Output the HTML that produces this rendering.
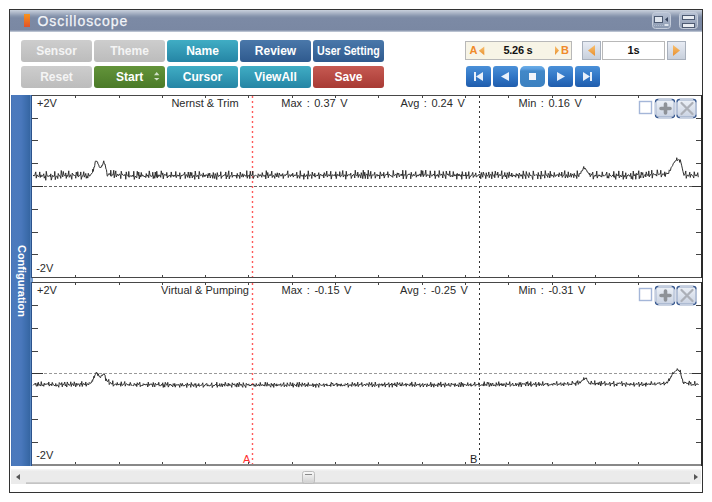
<!DOCTYPE html>
<html><head><meta charset="utf-8">
<style>
*{margin:0;padding:0;box-sizing:border-box}
html,body{width:712px;height:502px;background:#fff;overflow:hidden;font-family:"Liberation Sans",sans-serif}
.abs{position:absolute}
#win{position:absolute;left:9px;top:9px;width:694px;height:484px;border:1px solid #333;background:#fff}
#title{position:absolute;left:10px;top:10px;width:692px;height:22px;background:linear-gradient(#c8d0dc 0px,#aab4c6 3px,#8896ae 6px,#7c8aa5 8px,#7a88a3 20px,#a8b2c4 21px,#c8d0dc 22px)}
#title .t{position:absolute;left:27.5px;top:2px;font-size:14px;color:#f2f4f8;letter-spacing:0.95px;line-height:18px;-webkit-text-stroke:0.25px #f2f4f8}
#ticon{position:absolute;left:24px;top:14px;width:6px;height:13px;background:linear-gradient(#f7941d,#f07a20 40%,#e2522b)}
.tb{position:absolute;top:13px;width:19px;height:16px;border:1px solid #6a7894;border-radius:3px;background:linear-gradient(#c8d0de,#9aa6bc)}
.btn{position:absolute;width:71px;height:22px;border-radius:3px;color:#fff;font-size:12px;font-weight:bold;text-align:center;line-height:22px;white-space:nowrap}
.gray{background:linear-gradient(#cdcdcd,#bcbcbc);color:#f4f4f4}
.green{background:linear-gradient(#63943a,#4b7a28)}
.teal{background:linear-gradient(#40adc4,#2585a5)}
.blue{background:linear-gradient(#4a78aa,#2f5a8e)}
.red{background:linear-gradient(#c65a52,#a83a34)}
.mbtn{position:absolute;top:66px;width:25px;height:21px;border-radius:3px;background:linear-gradient(#4a90d8,#2f74c4 55%,#1f5cac)}
#sidebar{position:absolute;left:11px;top:95px;width:22px;height:371px;background:linear-gradient(90deg,#3d6aae 0px,#4c7abd 1px,#4a78bc 10px,#4272b4 13px,#3a6aa8 17px,#3565a2 19px,#5a88c0 19.5px,#5a88c0 20px,#2c528c 20.5px,#223a60 22px)}
#sidebar .t{position:absolute;left:-29px;top:179.5px;width:80px;font-size:11px;font-weight:bold;color:#fff;transform:rotate(90deg);transform-origin:center center;text-align:center;line-height:12px}
.lbl{position:absolute;font-size:11px;color:#222;white-space:nowrap;line-height:12px}
</style></head>
<body>
<div id="win"></div>
<div id="title"><div class="t">Oscilloscope</div></div>
<div id="ticon"></div>

<div class="btn gray" style="left:21px;top:40px">Sensor</div>
<div class="btn gray" style="left:94px;top:40px">Theme</div>
<div class="btn teal" style="left:167px;top:40px">Name</div>
<div class="btn blue" style="left:240px;top:40px">Review</div>
<div class="btn blue" style="left:313px;top:40px"><span style="display:inline-block;transform:scaleX(0.885)">User Setting</span></div>
<div class="btn gray" style="left:21px;top:66px">Reset</div>
<div class="btn green" style="left:94px;top:66px"><span style="position:absolute;left:22px;top:0">Start</span></div>
<div class="btn teal" style="left:167px;top:66px">Cursor</div>
<div class="btn teal" style="left:240px;top:66px">ViewAll</div>
<div class="btn red" style="left:313px;top:66px">Save</div>

<div class="abs" style="left:465px;top:41px;width:107px;height:19px;background:#f7f4e6;border:1px solid #b8b8b8"></div>
<div class="abs" style="left:469.5px;top:43px;font-size:11px;font-weight:bold;color:#f08a2a;line-height:14px">A</div>
<div class="abs" style="left:503.5px;top:43px;font-size:11px;font-weight:bold;color:#111;line-height:14px;letter-spacing:-0.3px">5.26 s</div>
<div class="abs" style="left:561px;top:43px;font-size:11px;font-weight:bold;color:#f08a2a;line-height:14px">B</div>
<div class="abs" style="left:582px;top:41px;width:19px;height:19px;background:linear-gradient(#e8ecf4,#c8d0dc);border:1px solid #a8b0bc"></div>
<div class="abs" style="left:602px;top:41px;width:63px;height:19px;background:#fff;border:1px solid #b8b8b8;font-size:11px;font-weight:bold;text-align:center;line-height:17px;color:#111">1s</div>
<div class="abs" style="left:667px;top:41px;width:19px;height:19px;background:linear-gradient(#e8ecf4,#c8d0dc);border:1px solid #a8b0bc"></div>

<div class="mbtn" style="left:466px"></div>
<div class="mbtn" style="left:493px"></div>
<div class="mbtn" style="left:520px;border-radius:5px;background:linear-gradient(#6aaee8 0px,#5a9ee0 3px,#4288c8 5px,#3b80c0 100%)"></div>
<div class="mbtn" style="left:548px"></div>
<div class="mbtn" style="left:575px"></div>

<div id="sidebar"><div class="t">Configuration</div></div>

<svg class="abs" style="left:0;top:0" width="712" height="502">
<defs><linearGradient id="pb" x1="0" y1="0" x2="0" y2="1"><stop offset="0" stop-color="#eef2f8"/><stop offset="1" stop-color="#c9d2e2"/></linearGradient><linearGradient id="trk" x1="0" y1="0" x2="0" y2="1"><stop offset="0" stop-color="#f8f8f8"/><stop offset="0.15" stop-color="#ebebeb"/><stop offset="1" stop-color="#ebebeb"/></linearGradient><linearGradient id="thumb" x1="0" y1="0" x2="0" y2="1"><stop offset="0" stop-color="#fafafa"/><stop offset="1" stop-color="#cfcfcf"/></linearGradient><linearGradient id="tbb" x1="0" y1="0" x2="0" y2="1"><stop offset="0" stop-color="#b8c2d4"/><stop offset="1" stop-color="#8a98b0"/></linearGradient><linearGradient id="arr" x1="0" y1="0" x2="0" y2="1"><stop offset="0" stop-color="#f8c070"/><stop offset="1" stop-color="#e89030"/></linearGradient></defs>
<rect x="32" y="95" width="670" height="182" fill="#fff"/>
<line x1="75.5" y1="95" x2="75.5" y2="98" stroke="#444" stroke-width="1"/>
<line x1="75.5" y1="275" x2="75.5" y2="277" stroke="#444" stroke-width="1"/>
<line x1="119.5" y1="95" x2="119.5" y2="98" stroke="#444" stroke-width="1"/>
<line x1="119.5" y1="275" x2="119.5" y2="277" stroke="#444" stroke-width="1"/>
<line x1="162.5" y1="95" x2="162.5" y2="98" stroke="#444" stroke-width="1"/>
<line x1="162.5" y1="275" x2="162.5" y2="277" stroke="#444" stroke-width="1"/>
<line x1="205.5" y1="95" x2="205.5" y2="98" stroke="#444" stroke-width="1"/>
<line x1="205.5" y1="275" x2="205.5" y2="277" stroke="#444" stroke-width="1"/>
<line x1="248.5" y1="95" x2="248.5" y2="98" stroke="#444" stroke-width="1"/>
<line x1="248.5" y1="275" x2="248.5" y2="277" stroke="#444" stroke-width="1"/>
<line x1="292.5" y1="95" x2="292.5" y2="98" stroke="#444" stroke-width="1"/>
<line x1="292.5" y1="275" x2="292.5" y2="277" stroke="#444" stroke-width="1"/>
<line x1="335.5" y1="95" x2="335.5" y2="98" stroke="#444" stroke-width="1"/>
<line x1="335.5" y1="275" x2="335.5" y2="277" stroke="#444" stroke-width="1"/>
<line x1="378.5" y1="95" x2="378.5" y2="98" stroke="#444" stroke-width="1"/>
<line x1="378.5" y1="275" x2="378.5" y2="277" stroke="#444" stroke-width="1"/>
<line x1="422.5" y1="95" x2="422.5" y2="98" stroke="#444" stroke-width="1"/>
<line x1="422.5" y1="275" x2="422.5" y2="277" stroke="#444" stroke-width="1"/>
<line x1="465.5" y1="95" x2="465.5" y2="98" stroke="#444" stroke-width="1"/>
<line x1="465.5" y1="275" x2="465.5" y2="277" stroke="#444" stroke-width="1"/>
<line x1="508.5" y1="95" x2="508.5" y2="98" stroke="#444" stroke-width="1"/>
<line x1="508.5" y1="275" x2="508.5" y2="277" stroke="#444" stroke-width="1"/>
<line x1="552.5" y1="95" x2="552.5" y2="98" stroke="#444" stroke-width="1"/>
<line x1="552.5" y1="275" x2="552.5" y2="277" stroke="#444" stroke-width="1"/>
<line x1="595.5" y1="95" x2="595.5" y2="98" stroke="#444" stroke-width="1"/>
<line x1="595.5" y1="275" x2="595.5" y2="277" stroke="#444" stroke-width="1"/>
<line x1="638.5" y1="95" x2="638.5" y2="98" stroke="#444" stroke-width="1"/>
<line x1="638.5" y1="275" x2="638.5" y2="277" stroke="#444" stroke-width="1"/>
<line x1="32" y1="118.5" x2="38" y2="118.5" stroke="#444" stroke-width="1"/>
<line x1="696" y1="118.5" x2="702" y2="118.5" stroke="#444" stroke-width="1"/>
<line x1="32" y1="140.5" x2="38" y2="140.5" stroke="#444" stroke-width="1"/>
<line x1="696" y1="140.5" x2="702" y2="140.5" stroke="#444" stroke-width="1"/>
<line x1="32" y1="163.5" x2="38" y2="163.5" stroke="#444" stroke-width="1"/>
<line x1="696" y1="163.5" x2="702" y2="163.5" stroke="#444" stroke-width="1"/>
<line x1="32" y1="209.5" x2="38" y2="209.5" stroke="#444" stroke-width="1"/>
<line x1="696" y1="209.5" x2="702" y2="209.5" stroke="#444" stroke-width="1"/>
<line x1="32" y1="232.5" x2="38" y2="232.5" stroke="#444" stroke-width="1"/>
<line x1="696" y1="232.5" x2="702" y2="232.5" stroke="#444" stroke-width="1"/>
<line x1="32" y1="254.5" x2="38" y2="254.5" stroke="#444" stroke-width="1"/>
<line x1="696" y1="254.5" x2="702" y2="254.5" stroke="#444" stroke-width="1"/>
<line x1="32" y1="186.5" x2="43" y2="186.5" stroke="#333" stroke-width="1"/>
<line x1="692" y1="186.5" x2="702" y2="186.5" stroke="#333" stroke-width="1"/>
<line x1="44" y1="186.5" x2="692" y2="186.5" stroke="#666" stroke-width="1" stroke-dasharray="3,2"/>
<line x1="252.5" y1="96" x2="252.5" y2="277" stroke="#ff5a5a" stroke-width="1.4" stroke-dasharray="2,3"/>
<line x1="479.5" y1="96" x2="479.5" y2="277" stroke="#333" stroke-width="1" stroke-dasharray="2,3"/>
<path d="M33.00,175.60 L34.00,175.54 L34.50,175.71 L35.00,174.37 L35.75,171.88 L36.25,178.17 L37.00,174.87 L37.50,175.98 L38.00,175.85 L38.50,176.49 L39.00,176.57 L39.75,171.92 L40.25,177.48 L41.00,174.84 L41.50,176.64 L42.00,176.14 L43.00,175.67 L43.75,173.79 L44.25,178.18 L45.00,176.66 L45.50,175.81 L45.75,180.29 L46.25,171.31 L47.00,175.76 L48.00,176.33 L48.50,176.44 L49.00,175.44 L49.50,175.84 L50.00,175.35 L50.50,176.71 L50.75,173.86 L51.25,180.11 L52.00,177.36 L52.50,175.36 L53.00,176.58 L54.00,175.79 L54.50,175.93 L54.75,171.42 L55.25,179.67 L56.00,176.61 L56.50,176.08 L57.00,175.99 L57.75,178.59 L58.25,173.51 L59.00,175.55 L59.50,175.50 L60.00,176.66 L60.50,176.39 L60.75,178.38 L61.25,170.52 L62.00,174.66 L62.50,176.08 L62.75,176.98 L63.25,171.48 L64.00,175.20 L64.50,175.57 L65.00,176.07 L65.50,174.41 L65.75,172.93 L66.25,178.42 L67.00,175.09 L67.50,176.39 L68.00,175.36 L68.75,170.84 L69.25,177.28 L70.00,176.12 L70.50,174.74 L71.00,175.97 L71.75,179.32 L72.25,173.06 L73.00,174.54 L73.50,174.61 L74.00,175.51 L74.50,176.01 L75.00,175.26 L75.50,176.39 L75.75,178.24 L76.25,172.14 L77.00,174.65 L77.50,175.81 L77.75,171.70 L78.25,177.05 L79.00,175.99 L79.50,175.24 L80.00,174.87 L80.50,174.94 L80.75,171.93 L81.25,179.34 L82.00,176.25 L83.00,175.72 L83.75,171.71 L84.25,177.13 L85.00,175.29 L85.50,174.93 L85.75,173.47 L86.25,178.29 L87.00,175.82 L87.50,176.41 L87.75,178.12 L88.25,173.31 L89.00,175.72 L89.50,176.22 L90.00,174.75 L90.50,175.04 L91.00,174.58 L92.00,172.94 L92.50,172.50 L92.75,169.19 L93.25,171.40 L94.00,166.92 L94.50,166.95 L94.75,165.28 L95.25,161.38 L96.00,160.87 L97.00,161.73 L97.50,161.81 L98.00,164.06 L98.75,164.88 L99.25,166.85 L100.00,167.82 L101.00,166.83 L101.50,167.07 L102.00,165.02 L102.50,165.26 L103.00,163.65 L103.75,160.82 L104.25,163.82 L105.00,163.96 L106.00,169.13 L106.50,169.74 L106.75,172.38 L107.25,176.17 L108.00,175.47 L108.50,173.74 L109.00,174.25 L110.00,173.61 L110.50,175.67 L110.75,170.23 L111.25,176.35 L112.00,175.42 L112.50,174.73 L113.00,175.11 L113.75,170.28 L114.25,177.79 L115.00,174.31 L115.75,170.90 L116.25,176.98 L117.00,175.55 L117.50,174.11 L118.00,174.86 L118.50,175.69 L119.00,174.44 L119.50,174.02 L120.00,175.35 L120.50,175.35 L120.75,178.62 L121.25,171.24 L122.00,174.51 L123.00,174.69 L124.00,175.84 L125.00,174.31 L125.50,175.95 L125.75,179.25 L126.25,171.88 L127.00,175.21 L128.00,176.39 L128.50,176.45 L128.75,171.45 L129.25,177.28 L130.00,176.45 L130.50,175.71 L131.00,175.94 L132.00,176.30 L132.50,175.22 L133.00,176.66 L133.50,176.41 L133.75,171.26 L134.25,179.40 L135.00,176.48 L136.00,176.65 L136.75,177.83 L137.25,171.28 L138.00,175.27 L138.50,175.47 L138.75,172.06 L139.25,179.00 L140.00,174.98 L140.75,177.09 L141.25,172.46 L142.00,176.23 L142.50,174.83 L143.00,175.64 L144.00,176.35 L145.00,176.58 L145.50,176.59 L145.75,177.58 L146.25,173.57 L147.00,176.33 L148.00,174.86 L148.75,177.67 L149.25,170.90 L150.00,174.96 L151.00,176.63 L152.00,175.76 L152.50,175.68 L152.75,172.21 L153.25,178.57 L154.00,175.64 L154.50,176.26 L154.75,178.28 L155.25,172.02 L156.00,176.55 L156.50,176.53 L156.75,171.25 L157.25,178.05 L158.00,174.78 L158.50,176.29 L159.00,176.48 L159.50,175.20 L160.00,174.92 L160.75,177.34 L161.25,170.84 L162.00,174.58 L162.50,174.53 L162.75,172.93 L163.25,178.88 L164.00,174.73 L165.00,174.77 L166.00,175.05 L166.50,175.67 L166.75,172.43 L167.25,177.98 L168.00,175.85 L169.00,176.40 L170.00,174.98 L170.50,175.69 L170.75,177.35 L171.25,171.94 L172.00,176.28 L173.00,175.19 L173.50,176.53 L174.00,174.98 L175.00,176.45 L175.50,175.03 L175.75,171.49 L176.25,177.67 L177.00,175.70 L178.00,174.94 L179.00,176.26 L179.50,175.75 L179.75,172.69 L180.25,179.13 L181.00,175.61 L182.00,175.61 L183.00,174.92 L183.50,174.73 L184.00,174.58 L184.75,172.18 L185.25,178.48 L186.00,174.75 L186.50,174.85 L187.00,175.12 L187.75,177.35 L188.25,171.97 L189.00,176.18 L189.50,175.53 L189.75,178.12 L190.25,172.18 L191.00,175.89 L191.50,174.94 L191.75,172.52 L192.25,177.93 L193.00,175.83 L193.50,176.24 L194.00,175.21 L194.50,176.35 L194.75,179.36 L195.25,171.00 L196.00,175.82 L197.00,176.66 L198.00,175.07 L198.75,179.02 L199.25,171.43 L200.00,174.79 L200.50,175.69 L201.00,175.31 L201.50,174.90 L202.00,174.96 L202.50,176.25 L202.75,177.26 L203.25,172.87 L204.00,176.49 L204.50,175.10 L205.00,176.62 L205.50,174.98 L206.00,175.39 L206.50,174.67 L207.00,175.63 L207.50,174.97 L207.75,178.03 L208.25,173.46 L209.00,175.85 L209.75,173.02 L210.25,178.04 L211.00,175.93 L211.50,175.07 L212.00,175.11 L212.50,175.69 L212.75,178.35 L213.25,172.50 L214.00,175.90 L214.75,178.55 L215.25,173.60 L216.00,175.35 L216.75,179.52 L217.25,172.60 L218.00,175.84 L218.50,176.58 L219.00,175.43 L220.00,175.82 L220.50,175.13 L220.75,171.72 L221.25,178.46 L222.00,176.15 L222.50,176.20 L223.00,175.79 L224.00,175.40 L225.00,174.62 L225.50,175.38 L225.75,171.96 L226.25,178.88 L227.00,175.44 L227.50,176.64 L228.00,175.04 L228.75,170.80 L229.25,178.88 L230.00,175.83 L230.50,175.87 L231.00,175.50 L231.50,174.61 L231.75,172.13 L232.25,177.32 L233.00,175.42 L234.00,175.91 L235.00,175.30 L236.00,176.29 L236.50,175.14 L236.75,178.25 L237.25,173.43 L238.00,176.23 L239.00,175.29 L239.50,176.01 L239.75,178.54 L240.25,172.01 L241.00,174.92 L241.50,176.66 L242.00,176.51 L242.75,173.72 L243.25,177.16 L244.00,174.56 L244.50,174.99 L245.00,175.11 L246.00,176.51 L246.50,175.02 L246.75,170.66 L247.25,178.26 L248.00,175.26 L249.00,176.34 L249.50,174.76 L249.75,178.62 L250.25,171.22 L251.00,175.48 L252.00,175.35 L252.50,174.83 L252.75,171.13 L253.25,178.55 L254.00,176.31 L254.50,175.93 L255.00,175.77 L255.50,175.20 L256.00,175.68 L256.50,175.74 L257.00,176.28 L257.50,176.30 L257.75,177.79 L258.25,173.80 L259.00,174.66 L259.50,176.08 L260.00,176.01 L260.50,174.79 L261.00,175.27 L261.75,177.28 L262.25,172.64 L263.00,175.78 L264.00,175.98 L264.50,175.64 L265.00,176.65 L265.50,174.96 L265.75,178.87 L266.25,170.67 L267.00,175.26 L267.50,175.27 L267.75,172.53 L268.25,177.97 L269.00,175.27 L269.50,174.80 L270.00,175.76 L270.50,174.66 L271.00,175.46 L271.75,171.17 L272.25,177.53 L273.00,175.70 L274.00,175.88 L274.75,178.37 L275.25,173.59 L276.00,175.18 L276.50,174.68 L276.75,177.01 L277.25,172.78 L278.00,176.08 L278.75,177.52 L279.25,172.99 L280.00,175.18 L280.50,175.21 L281.00,176.21 L281.50,174.74 L282.00,175.51 L282.75,173.55 L283.25,178.54 L284.00,175.20 L284.50,175.26 L285.00,174.63 L285.50,175.62 L286.00,174.48 L286.50,174.45 L287.00,174.67 L287.75,170.80 L288.25,177.56 L289.00,175.25 L289.50,174.87 L290.00,175.35 L290.50,176.55 L291.00,174.55 L291.50,174.67 L292.00,175.84 L292.75,173.18 L293.25,177.08 L294.00,175.47 L295.00,175.10 L295.50,175.20 L296.00,175.70 L296.75,172.22 L297.25,178.23 L298.00,175.29 L299.00,176.46 L299.75,178.33 L300.25,170.69 L301.00,176.35 L302.00,175.14 L303.00,176.49 L303.50,174.87 L303.75,179.34 L304.25,173.57 L305.00,176.52 L306.00,176.07 L307.00,174.49 L307.75,179.13 L308.25,170.81 L309.00,176.11 L310.00,175.68 L310.50,174.70 L311.00,175.05 L311.50,176.26 L311.75,178.50 L312.25,172.01 L313.00,175.47 L313.50,175.59 L314.00,174.72 L314.50,176.35 L314.75,173.19 L315.25,177.16 L316.00,175.90 L316.50,175.38 L317.00,175.35 L318.00,175.60 L318.75,172.67 L319.25,178.86 L320.00,174.50 L321.00,174.75 L322.00,175.45 L322.50,176.12 L323.00,174.97 L323.50,174.45 L323.75,177.99 L324.25,172.64 L325.00,174.44 L325.50,175.74 L326.00,175.76 L326.75,171.07 L327.25,177.08 L328.00,175.83 L328.50,174.91 L329.00,174.50 L330.00,176.13 L330.75,171.26 L331.25,179.09 L332.00,175.07 L333.00,174.89 L333.50,175.10 L334.00,175.70 L334.50,174.67 L335.00,175.83 L335.50,176.30 L335.75,171.74 L336.25,178.60 L337.00,174.42 L337.50,174.42 L338.00,175.70 L339.00,174.60 L339.50,176.05 L339.75,171.62 L340.25,176.93 L341.00,176.37 L341.50,175.89 L342.00,174.94 L342.75,170.52 L343.25,177.05 L344.00,175.99 L344.50,174.91 L345.00,175.08 L345.50,175.06 L345.75,179.22 L346.25,171.25 L347.00,176.33 L348.00,174.73 L348.50,174.83 L349.00,175.13 L350.00,174.60 L350.50,174.80 L350.75,173.16 L351.25,178.50 L352.00,176.13 L353.00,174.91 L354.00,174.44 L354.75,177.97 L355.25,170.27 L356.00,175.37 L356.50,175.57 L357.00,175.82 L357.50,175.17 L357.75,172.10 L358.25,177.48 L359.00,174.69 L360.00,175.10 L360.75,178.08 L361.25,172.67 L362.00,175.32 L362.50,176.09 L362.75,178.71 L363.25,170.21 L364.00,176.13 L364.50,175.59 L364.75,172.24 L365.25,178.55 L366.00,174.48 L367.00,174.23 L367.50,174.46 L367.75,179.00 L368.25,170.20 L369.00,175.72 L370.00,176.04 L370.75,171.31 L371.25,178.53 L372.00,175.07 L372.50,174.89 L373.00,175.29 L373.50,175.18 L374.00,174.61 L374.75,172.30 L375.25,178.19 L376.00,175.75 L376.50,175.11 L377.00,174.24 L377.50,175.99 L378.00,176.02 L379.00,174.90 L379.50,175.96 L379.75,178.85 L380.25,171.84 L381.00,174.25 L381.50,176.06 L382.00,174.72 L383.00,174.91 L383.50,175.98 L383.75,172.37 L384.25,178.08 L385.00,175.29 L386.00,174.64 L387.00,174.12 L387.50,174.95 L387.75,171.68 L388.25,177.49 L389.00,174.19 L390.00,175.15 L391.00,176.01 L392.00,176.14 L392.75,177.39 L393.25,170.45 L394.00,175.70 L394.50,175.57 L395.00,175.17 L396.00,174.14 L396.75,177.81 L397.25,172.86 L398.00,174.56 L398.75,173.18 L399.25,176.85 L400.00,175.69 L400.50,174.68 L401.00,175.19 L401.50,173.97 L402.00,175.89 L402.50,175.01 L402.75,170.23 L403.25,178.95 L404.00,174.36 L405.00,175.44 L405.50,174.62 L405.75,170.48 L406.25,178.76 L407.00,175.87 L408.00,174.38 L409.00,174.36 L410.00,174.05 L410.50,175.54 L410.75,178.79 L411.25,172.28 L412.00,175.89 L412.50,176.06 L413.00,175.67 L413.50,174.33 L414.00,175.86 L414.50,175.48 L415.00,174.56 L415.75,171.69 L416.25,177.24 L417.00,175.13 L417.50,175.11 L418.00,176.13 L419.00,174.38 L419.50,174.27 L420.00,175.45 L420.50,174.15 L420.75,176.68 L421.25,170.36 L422.00,175.31 L422.50,174.55 L422.75,170.74 L423.25,176.73 L424.00,174.54 L424.50,175.21 L425.00,174.42 L425.75,170.15 L426.25,176.60 L427.00,174.86 L428.00,175.12 L428.50,175.24 L429.00,175.44 L429.50,175.47 L429.75,177.87 L430.25,170.83 L431.00,175.54 L432.00,176.13 L432.50,175.75 L433.00,174.40 L434.00,174.56 L434.50,175.75 L434.75,170.84 L435.25,178.61 L436.00,175.25 L437.00,175.39 L437.50,174.50 L438.00,176.20 L438.50,175.05 L438.75,177.41 L439.25,170.56 L440.00,175.16 L440.50,175.04 L441.00,174.65 L442.00,174.24 L442.75,178.00 L443.25,171.59 L444.00,175.46 L444.50,175.02 L445.00,175.62 L445.75,178.63 L446.25,171.05 L447.00,174.30 L448.00,174.48 L448.50,174.46 L449.00,175.63 L449.75,170.91 L450.25,176.77 L451.00,175.66 L452.00,176.23 L452.50,175.78 L452.75,176.98 L453.25,171.52 L454.00,175.77 L454.50,174.66 L455.00,176.09 L455.50,175.00 L456.00,174.80 L456.50,174.31 L456.75,179.23 L457.25,173.38 L458.00,175.50 L458.50,174.41 L459.00,176.03 L459.50,174.34 L460.00,174.66 L460.50,176.24 L461.00,176.19 L461.50,174.51 L461.75,179.25 L462.25,171.61 L463.00,175.70 L464.00,175.47 L465.00,175.20 L465.50,176.03 L465.75,172.29 L466.25,178.71 L467.00,174.73 L468.00,175.96 L468.50,175.07 L468.75,171.62 L469.25,178.67 L470.00,176.39 L471.00,176.10 L471.50,175.05 L472.00,174.37 L472.75,172.38 L473.25,177.43 L474.00,175.85 L475.00,175.47 L475.75,172.87 L476.25,176.99 L477.00,176.29 L477.50,175.91 L478.00,175.82 L479.00,174.28 L479.50,175.08 L480.00,174.42 L480.75,178.75 L481.25,172.54 L482.00,174.91 L482.75,177.24 L483.25,172.01 L484.00,174.33 L484.50,175.19 L485.00,175.46 L485.50,175.81 L485.75,178.65 L486.25,172.77 L487.00,176.20 L488.00,175.45 L488.50,174.57 L488.75,171.95 L489.25,177.70 L490.00,175.04 L490.50,174.37 L491.00,174.34 L491.75,178.89 L492.25,171.80 L493.00,175.74 L493.50,176.17 L494.00,175.52 L494.50,174.56 L494.75,177.77 L495.25,171.13 L496.00,174.50 L496.50,175.17 L497.00,174.44 L497.50,175.03 L497.75,172.05 L498.25,177.54 L499.00,174.76 L500.00,175.09 L501.00,175.47 L501.75,170.73 L502.25,178.92 L503.00,175.88 L504.00,175.88 L504.50,175.20 L504.75,172.51 L505.25,177.00 L506.00,175.17 L506.75,178.72 L507.25,172.72 L508.00,174.40 L508.50,176.31 L508.75,177.54 L509.25,171.87 L510.00,175.77 L510.50,175.11 L511.00,176.34 L511.50,175.92 L511.75,173.01 L512.25,177.06 L513.00,175.28 L513.50,174.98 L514.00,176.20 L515.00,175.22 L515.75,177.24 L516.25,173.61 L517.00,175.48 L517.50,174.43 L518.00,175.72 L518.50,174.96 L518.75,178.25 L519.25,173.03 L520.00,174.41 L521.00,176.27 L522.00,174.58 L522.75,178.70 L523.25,170.88 L524.00,175.17 L525.00,175.10 L525.75,178.70 L526.25,171.50 L527.00,174.76 L528.00,175.50 L528.75,177.66 L529.25,172.57 L530.00,175.52 L531.00,175.22 L532.00,176.44 L532.75,179.50 L533.25,170.92 L534.00,175.11 L535.00,175.56 L536.00,174.52 L537.00,175.34 L537.50,175.19 L537.75,178.86 L538.25,172.49 L539.00,176.01 L539.50,176.01 L540.00,175.16 L540.50,176.11 L540.75,179.10 L541.25,171.05 L542.00,175.85 L542.50,176.07 L543.00,175.04 L543.50,174.89 L544.00,175.81 L544.50,175.88 L544.75,178.18 L545.25,170.64 L546.00,175.04 L546.50,175.01 L547.00,175.92 L547.50,175.95 L547.75,177.36 L548.25,173.36 L549.00,174.88 L549.50,175.64 L549.75,178.01 L550.25,171.20 L551.00,176.34 L551.50,174.61 L552.00,175.43 L553.00,175.90 L553.50,176.05 L553.75,177.34 L554.25,172.49 L555.00,176.00 L556.00,176.23 L556.50,174.86 L557.00,174.71 L558.00,175.03 L558.50,174.74 L558.75,177.03 L559.25,172.78 L560.00,175.08 L560.50,175.19 L561.00,174.66 L561.50,175.70 L561.75,172.02 L562.25,177.38 L563.00,175.96 L563.50,175.23 L564.00,174.80 L564.75,170.62 L565.25,178.05 L566.00,176.27 L566.50,174.62 L567.00,175.71 L567.75,177.72 L568.25,171.82 L569.00,176.69 L569.50,176.33 L570.00,176.09 L570.50,174.56 L570.75,173.23 L571.25,177.24 L572.00,174.42 L573.00,174.44 L573.50,176.25 L573.75,177.68 L574.25,173.38 L575.00,175.95 L576.00,175.72 L576.50,175.87 L576.75,178.53 L577.25,170.69 L578.00,176.03 L578.50,175.81 L578.75,176.68 L579.25,173.62 L580.00,173.71 L580.50,173.53 L580.75,173.67 L581.25,170.95 L582.00,171.03 L582.50,170.72 L583.00,169.12 L583.75,166.53 L584.25,169.12 L585.00,167.98 L586.00,169.86 L586.75,170.30 L587.25,172.10 L588.00,172.58 L588.50,172.79 L589.00,173.99 L589.50,174.88 L589.75,173.19 L590.25,176.73 L591.00,174.84 L592.00,174.39 L592.75,172.12 L593.25,179.17 L594.00,175.91 L595.00,176.00 L595.50,175.07 L596.00,176.25 L596.75,171.07 L597.25,178.11 L598.00,175.66 L598.50,175.68 L599.00,174.75 L600.00,176.26 L601.00,175.71 L601.75,177.14 L602.25,171.85 L603.00,176.00 L603.50,175.39 L604.00,176.23 L605.00,175.23 L606.00,174.52 L606.75,172.08 L607.25,178.12 L608.00,175.77 L608.75,178.20 L609.25,173.34 L610.00,175.87 L610.50,175.54 L611.00,175.74 L611.50,176.65 L612.00,176.20 L613.00,174.81 L613.50,176.60 L613.75,171.37 L614.25,177.45 L615.00,175.73 L615.75,179.38 L616.25,173.76 L617.00,175.78 L617.50,175.10 L618.00,174.69 L618.50,175.74 L618.75,170.91 L619.25,177.80 L620.00,176.43 L620.50,175.23 L621.00,176.48 L622.00,176.44 L622.75,171.17 L623.25,179.33 L624.00,175.17 L624.50,176.82 L625.00,176.90 L625.50,175.43 L625.75,172.75 L626.25,178.85 L627.00,176.07 L628.00,174.83 L629.00,175.08 L630.00,176.51 L630.75,173.25 L631.25,178.77 L632.00,176.29 L632.75,179.41 L633.25,171.05 L634.00,175.93 L634.50,174.69 L635.00,175.89 L635.50,174.64 L635.75,179.26 L636.25,173.29 L637.00,174.95 L637.50,174.42 L638.00,174.68 L638.75,170.71 L639.25,178.69 L640.00,175.53 L640.50,175.94 L640.75,177.78 L641.25,172.12 L642.00,174.81 L642.75,172.59 L643.25,178.01 L644.00,176.06 L644.50,175.39 L645.00,174.42 L645.50,174.36 L645.75,176.95 L646.25,171.88 L647.00,174.75 L647.50,174.80 L648.00,175.89 L648.50,175.32 L648.75,170.91 L649.25,176.88 L650.00,175.01 L651.00,174.53 L651.50,173.90 L651.75,170.15 L652.25,178.16 L653.00,173.85 L654.00,173.81 L654.50,174.44 L655.00,175.18 L656.00,174.33 L656.75,176.11 L657.25,169.81 L658.00,173.69 L658.50,174.64 L659.00,174.56 L660.00,173.62 L660.50,173.53 L660.75,170.25 L661.25,177.09 L662.00,174.99 L663.00,173.57 L663.50,174.30 L664.00,174.84 L664.50,175.58 L664.75,171.82 L665.25,176.61 L666.00,173.11 L667.00,173.26 L668.00,173.69 L668.75,173.41 L669.25,169.89 L670.00,170.77 L670.50,170.47 L671.00,167.77 L672.00,166.44 L672.75,165.29 L673.25,163.43 L674.00,162.97 L675.00,161.10 L676.00,160.56 L676.50,160.24 L676.75,157.74 L677.25,160.73 L678.00,160.02 L678.50,159.66 L679.00,159.56 L679.50,159.95 L679.75,162.42 L680.25,159.65 L681.00,162.81 L681.75,165.84 L682.25,168.12 L683.00,171.61 L684.00,175.47 L684.50,174.53 L685.00,174.28 L685.75,170.94 L686.25,178.33 L687.00,175.38 L687.50,175.10 L688.00,176.06 L689.00,175.76 L689.75,172.20 L690.25,177.40 L691.00,174.40 L692.00,174.91 L692.50,175.63 L693.00,176.18 L693.75,178.06 L694.25,171.76 L695.00,175.67 L695.50,175.61 L696.00,174.81 L696.50,176.07 L697.00,175.21 L697.75,172.66 L698.25,177.20" fill="none" stroke="#303030" stroke-width="1" stroke-linejoin="round"/>
<rect x="32" y="95" width="670" height="1" fill="#484848"/>
<rect x="32" y="277" width="670" height="1" fill="#484848"/>
<rect x="701" y="95" width="2" height="183" fill="#2a2a2a"/>
<text x="37" y="106.5" font-family="Liberation Sans" font-size="11" fill="#2a2a2a" text-anchor="start">+2V</text>
<text x="205" y="106.5" font-family="Liberation Sans" font-size="11" fill="#2a2a2a" text-anchor="middle">Nernst &amp; Trim</text>
<text x="281.3" y="106.5" font-family="Liberation Sans" font-size="11" fill="#2a2a2a" text-anchor="start" word-spacing="1.5">Max : 0.37 V</text>
<text x="400.5" y="106.5" font-family="Liberation Sans" font-size="11" fill="#2a2a2a" text-anchor="start" word-spacing="1.5">Avg : 0.24 V</text>
<text x="518.6" y="106.5" font-family="Liberation Sans" font-size="11" fill="#2a2a2a" text-anchor="start" word-spacing="1.5">Min : 0.16 V</text>
<text x="36.2" y="271.5" font-family="Liberation Sans" font-size="11" fill="#2a2a2a" text-anchor="start">-2V</text>
<rect x="639.5" y="101.5" width="12" height="12" fill="#fff" stroke="#a4b6d8" stroke-width="1.4"/>
<rect x="655.5" y="99.5" width="19" height="18" rx="2.5" fill="url(#pb)" stroke="#3a5a90" stroke-width="1.3"/>
<path d="M658.3,99.5 H671.7 M658.3,117.5 H671.7 M655.5,102.3 V114.7 M674.5,102.3 V114.7" stroke="#c4cee0" stroke-width="1.6"/>
<rect x="677.0" y="99.5" width="19" height="18" rx="2.5" fill="url(#pb)" stroke="#3a5a90" stroke-width="1.3"/>
<path d="M679.8,99.5 H693.2 M679.8,117.5 H693.2 M677.0,102.3 V114.7 M696.0,102.3 V114.7" stroke="#c4cee0" stroke-width="1.6"/>
<path d="M661.0,108.5 H670.0 M665.5,104.0 V113.0" stroke="#8e9298" stroke-width="3.6" stroke-linecap="round"/>
<path d="M681.5,103.0 L692.5,114.0 M692.5,103.0 L681.5,114.0" stroke="#acb0b8" stroke-width="2.3" stroke-linecap="round"/>
<rect x="32" y="282" width="670" height="183" fill="#fff"/>
<line x1="75.5" y1="282" x2="75.5" y2="285" stroke="#444" stroke-width="1"/>
<line x1="75.5" y1="462" x2="75.5" y2="464" stroke="#444" stroke-width="1"/>
<line x1="119.5" y1="282" x2="119.5" y2="285" stroke="#444" stroke-width="1"/>
<line x1="119.5" y1="462" x2="119.5" y2="464" stroke="#444" stroke-width="1"/>
<line x1="162.5" y1="282" x2="162.5" y2="285" stroke="#444" stroke-width="1"/>
<line x1="162.5" y1="462" x2="162.5" y2="464" stroke="#444" stroke-width="1"/>
<line x1="205.5" y1="282" x2="205.5" y2="285" stroke="#444" stroke-width="1"/>
<line x1="205.5" y1="462" x2="205.5" y2="464" stroke="#444" stroke-width="1"/>
<line x1="248.5" y1="282" x2="248.5" y2="285" stroke="#444" stroke-width="1"/>
<line x1="248.5" y1="462" x2="248.5" y2="464" stroke="#444" stroke-width="1"/>
<line x1="292.5" y1="282" x2="292.5" y2="285" stroke="#444" stroke-width="1"/>
<line x1="292.5" y1="462" x2="292.5" y2="464" stroke="#444" stroke-width="1"/>
<line x1="335.5" y1="282" x2="335.5" y2="285" stroke="#444" stroke-width="1"/>
<line x1="335.5" y1="462" x2="335.5" y2="464" stroke="#444" stroke-width="1"/>
<line x1="378.5" y1="282" x2="378.5" y2="285" stroke="#444" stroke-width="1"/>
<line x1="378.5" y1="462" x2="378.5" y2="464" stroke="#444" stroke-width="1"/>
<line x1="422.5" y1="282" x2="422.5" y2="285" stroke="#444" stroke-width="1"/>
<line x1="422.5" y1="462" x2="422.5" y2="464" stroke="#444" stroke-width="1"/>
<line x1="465.5" y1="282" x2="465.5" y2="285" stroke="#444" stroke-width="1"/>
<line x1="465.5" y1="462" x2="465.5" y2="464" stroke="#444" stroke-width="1"/>
<line x1="508.5" y1="282" x2="508.5" y2="285" stroke="#444" stroke-width="1"/>
<line x1="508.5" y1="462" x2="508.5" y2="464" stroke="#444" stroke-width="1"/>
<line x1="552.5" y1="282" x2="552.5" y2="285" stroke="#444" stroke-width="1"/>
<line x1="552.5" y1="462" x2="552.5" y2="464" stroke="#444" stroke-width="1"/>
<line x1="595.5" y1="282" x2="595.5" y2="285" stroke="#444" stroke-width="1"/>
<line x1="595.5" y1="462" x2="595.5" y2="464" stroke="#444" stroke-width="1"/>
<line x1="638.5" y1="282" x2="638.5" y2="285" stroke="#444" stroke-width="1"/>
<line x1="638.5" y1="462" x2="638.5" y2="464" stroke="#444" stroke-width="1"/>
<line x1="32" y1="305.5" x2="38" y2="305.5" stroke="#444" stroke-width="1"/>
<line x1="696" y1="305.5" x2="702" y2="305.5" stroke="#444" stroke-width="1"/>
<line x1="32" y1="328.5" x2="38" y2="328.5" stroke="#444" stroke-width="1"/>
<line x1="696" y1="328.5" x2="702" y2="328.5" stroke="#444" stroke-width="1"/>
<line x1="32" y1="351.5" x2="38" y2="351.5" stroke="#444" stroke-width="1"/>
<line x1="696" y1="351.5" x2="702" y2="351.5" stroke="#444" stroke-width="1"/>
<line x1="32" y1="396.5" x2="38" y2="396.5" stroke="#444" stroke-width="1"/>
<line x1="696" y1="396.5" x2="702" y2="396.5" stroke="#444" stroke-width="1"/>
<line x1="32" y1="419.5" x2="38" y2="419.5" stroke="#444" stroke-width="1"/>
<line x1="696" y1="419.5" x2="702" y2="419.5" stroke="#444" stroke-width="1"/>
<line x1="32" y1="442.5" x2="38" y2="442.5" stroke="#444" stroke-width="1"/>
<line x1="696" y1="442.5" x2="702" y2="442.5" stroke="#444" stroke-width="1"/>
<line x1="32" y1="373.5" x2="43" y2="373.5" stroke="#333" stroke-width="1"/>
<line x1="692" y1="373.5" x2="702" y2="373.5" stroke="#333" stroke-width="1"/>
<line x1="44" y1="373.5" x2="692" y2="373.5" stroke="#999" stroke-width="1" stroke-dasharray="3,2"/>
<line x1="252.5" y1="283" x2="252.5" y2="465" stroke="#ff5a5a" stroke-width="1.4" stroke-dasharray="2,3"/>
<line x1="479.5" y1="283" x2="479.5" y2="465" stroke="#333" stroke-width="1" stroke-dasharray="2,3"/>
<path d="M33.00,385.28 L33.50,384.68 L34.00,384.35 L35.00,383.78 L35.50,384.40 L35.75,383.04 L36.25,386.20 L37.00,385.49 L37.50,383.57 L37.75,386.18 L38.25,382.26 L39.00,385.11 L40.00,384.87 L40.75,386.08 L41.25,381.62 L42.00,385.50 L42.50,385.52 L43.00,384.72 L43.75,386.31 L44.25,383.19 L45.00,384.87 L45.50,383.95 L46.00,384.24 L47.00,383.99 L47.50,383.80 L48.00,383.69 L48.50,384.76 L48.75,381.97 L49.25,386.09 L50.00,384.71 L51.00,384.54 L51.50,383.93 L51.75,385.75 L52.25,382.38 L53.00,384.12 L54.00,385.49 L55.00,385.55 L55.50,385.61 L55.75,383.51 L56.25,386.28 L57.00,385.05 L58.00,385.30 L58.75,387.27 L59.25,382.59 L60.00,383.73 L61.00,384.67 L61.50,384.21 L61.75,382.55 L62.25,386.86 L63.00,384.09 L63.50,384.72 L64.00,383.98 L64.75,381.99 L65.25,385.97 L66.00,384.50 L66.50,385.40 L66.75,387.02 L67.25,381.96 L68.00,383.72 L69.00,385.37 L70.00,384.65 L70.50,384.15 L70.75,381.81 L71.25,386.48 L72.00,383.75 L73.00,384.18 L73.75,385.83 L74.25,381.82 L75.00,384.16 L75.75,386.88 L76.25,383.20 L77.00,385.43 L77.50,384.13 L78.00,383.49 L79.00,384.93 L79.50,385.02 L79.75,386.43 L80.25,383.31 L81.00,384.24 L81.50,384.59 L81.75,381.40 L82.25,386.51 L83.00,383.97 L84.00,383.53 L85.00,385.07 L85.50,384.90 L85.75,381.97 L86.25,386.26 L87.00,384.13 L88.00,383.85 L88.75,384.85 L89.25,382.50 L90.00,383.39 L91.00,382.78 L91.50,382.63 L92.00,380.73 L92.50,381.30 L93.00,378.96 L93.50,378.93 L93.75,376.36 L94.25,377.78 L95.00,374.71 L95.75,374.06 L96.25,372.21 L97.00,373.34 L97.50,373.15 L97.75,375.61 L98.25,373.76 L99.00,376.40 L99.50,376.35 L100.00,377.22 L100.50,377.78 L100.75,376.97 L101.25,375.38 L102.00,375.17 L102.50,375.56 L103.00,374.16 L104.00,374.05 L105.00,375.06 L105.75,380.87 L106.25,378.81 L107.00,381.30 L107.50,381.42 L108.00,381.48 L108.75,379.38 L109.25,384.56 L110.00,383.41 L110.50,382.41 L111.00,383.32 L112.00,384.19 L112.50,384.11 L112.75,380.69 L113.25,386.23 L114.00,384.94 L114.50,384.82 L115.00,384.28 L115.50,383.72 L116.00,384.62 L116.50,383.95 L116.75,385.32 L117.25,382.47 L118.00,385.01 L119.00,384.21 L119.50,384.01 L120.00,384.74 L120.50,383.75 L120.75,386.30 L121.25,381.77 L122.00,385.24 L123.00,385.09 L123.50,384.34 L124.00,383.86 L124.75,381.54 L125.25,386.18 L126.00,384.28 L126.50,383.59 L127.00,384.32 L128.00,385.04 L129.00,384.92 L129.50,383.92 L129.75,385.62 L130.25,382.38 L131.00,384.55 L132.00,385.50 L132.50,385.01 L133.00,385.62 L133.75,385.62 L134.25,383.40 L135.00,384.76 L135.50,384.39 L136.00,385.68 L136.50,384.29 L136.75,386.57 L137.25,382.73 L138.00,384.44 L139.00,384.22 L139.75,382.21 L140.25,386.66 L141.00,385.15 L141.50,385.66 L142.00,385.78 L142.50,385.49 L142.75,385.91 L143.25,383.66 L144.00,384.83 L145.00,383.97 L145.50,384.99 L146.00,384.76 L147.00,383.95 L147.75,386.99 L148.25,382.12 L149.00,385.62 L149.50,384.41 L150.00,384.12 L151.00,384.28 L152.00,384.00 L152.75,386.87 L153.25,382.47 L154.00,385.27 L154.50,385.59 L154.75,386.90 L155.25,383.26 L156.00,384.02 L156.50,384.91 L157.00,384.57 L158.00,384.07 L158.50,384.61 L158.75,382.31 L159.25,386.10 L160.00,385.34 L160.50,385.68 L161.00,385.50 L161.50,384.34 L162.00,385.35 L162.75,382.78 L163.25,387.42 L164.00,384.53 L164.75,387.12 L165.25,382.34 L166.00,384.23 L166.50,384.13 L167.00,385.36 L167.50,384.67 L167.75,382.37 L168.25,387.11 L169.00,385.77 L169.50,384.32 L170.00,385.10 L170.50,384.08 L171.00,385.19 L172.00,385.55 L172.75,386.86 L173.25,383.65 L174.00,384.89 L174.50,385.86 L174.75,383.43 L175.25,387.16 L176.00,384.68 L176.50,384.86 L177.00,384.96 L178.00,384.81 L179.00,384.75 L179.75,387.40 L180.25,383.61 L181.00,384.07 L181.75,386.16 L182.25,383.31 L183.00,385.54 L184.00,385.93 L185.00,385.27 L186.00,384.29 L186.50,385.06 L186.75,387.52 L187.25,382.93 L188.00,385.14 L189.00,385.02 L190.00,384.36 L190.50,385.45 L190.75,387.29 L191.25,382.53 L192.00,385.10 L193.00,384.96 L193.75,386.61 L194.25,383.84 L195.00,384.55 L195.50,385.22 L195.75,383.51 L196.25,387.57 L197.00,385.20 L198.00,385.05 L198.50,385.89 L198.75,383.56 L199.25,386.27 L200.00,385.97 L200.50,385.46 L201.00,385.49 L202.00,384.68 L202.75,382.80 L203.25,387.35 L204.00,385.80 L205.00,385.47 L205.50,384.25 L206.00,384.37 L206.75,383.40 L207.25,386.12 L208.00,384.73 L208.50,385.74 L209.00,385.62 L210.00,386.00 L210.50,385.13 L211.00,384.79 L211.75,382.78 L212.25,387.58 L213.00,385.57 L214.00,385.69 L215.00,385.08 L216.00,384.09 L216.50,385.45 L216.75,382.17 L217.25,387.34 L218.00,385.09 L218.50,385.43 L219.00,385.41 L219.50,385.60 L219.75,383.57 L220.25,386.43 L221.00,385.61 L221.50,385.04 L221.75,383.61 L222.25,386.95 L223.00,384.23 L223.50,384.77 L224.00,384.00 L224.50,385.93 L224.75,386.21 L225.25,382.26 L226.00,384.44 L226.50,385.37 L227.00,385.03 L227.50,385.93 L227.75,386.24 L228.25,383.15 L229.00,385.80 L229.50,384.04 L230.00,384.36 L230.50,385.15 L231.00,385.03 L231.75,387.39 L232.25,382.83 L233.00,384.54 L234.00,384.27 L234.50,384.39 L234.75,383.79 L235.25,386.33 L236.00,385.39 L236.50,384.53 L236.75,387.12 L237.25,383.00 L238.00,385.11 L238.50,384.64 L238.75,386.71 L239.25,382.35 L240.00,384.80 L240.50,385.16 L241.00,384.07 L242.00,385.91 L242.75,387.32 L243.25,382.65 L244.00,384.97 L244.50,385.59 L245.00,385.69 L245.75,387.56 L246.25,383.34 L247.00,384.59 L248.00,384.84 L248.75,383.88 L249.25,386.04 L250.00,385.14 L251.00,385.81 L251.50,384.19 L252.00,385.02 L252.50,384.85 L253.00,384.22 L253.50,385.13 L253.75,383.85 L254.25,386.36 L255.00,385.05 L255.75,386.49 L256.25,383.51 L257.00,385.46 L257.50,385.49 L258.00,385.86 L258.50,384.33 L259.00,384.68 L259.75,386.17 L260.25,382.43 L261.00,385.43 L262.00,384.96 L263.00,384.78 L263.50,385.78 L264.00,384.86 L264.75,386.16 L265.25,382.17 L266.00,385.16 L266.75,386.23 L267.25,382.55 L268.00,385.63 L268.50,385.08 L269.00,384.15 L269.50,385.29 L270.00,385.90 L270.75,387.19 L271.25,383.29 L272.00,385.36 L272.50,385.75 L273.00,384.03 L273.75,387.40 L274.25,383.06 L275.00,384.18 L276.00,385.93 L276.50,385.93 L276.75,383.80 L277.25,386.03 L278.00,385.05 L278.50,384.64 L279.00,385.38 L279.50,384.66 L280.00,385.13 L280.75,383.66 L281.25,386.43 L282.00,385.42 L283.00,384.47 L283.75,382.55 L284.25,386.81 L285.00,385.21 L285.50,385.23 L286.00,384.80 L286.75,386.60 L287.25,382.79 L288.00,384.78 L288.50,385.18 L289.00,385.61 L289.75,385.91 L290.25,382.37 L291.00,384.04 L291.50,386.00 L292.00,385.46 L292.50,385.82 L292.75,382.84 L293.25,387.28 L294.00,384.51 L294.50,384.42 L295.00,384.79 L296.00,385.91 L296.50,384.26 L296.75,386.60 L297.25,382.58 L298.00,384.77 L298.50,385.04 L298.75,387.11 L299.25,382.07 L300.00,385.41 L300.50,384.55 L301.00,384.47 L301.50,385.27 L301.75,386.52 L302.25,382.79 L303.00,384.95 L304.00,384.98 L304.75,383.13 L305.25,386.69 L306.00,385.32 L306.50,385.92 L307.00,384.15 L307.50,385.76 L307.75,386.49 L308.25,382.60 L309.00,385.43 L309.50,385.34 L310.00,385.29 L311.00,385.00 L312.00,385.42 L312.50,385.13 L312.75,383.54 L313.25,386.93 L314.00,384.22 L314.50,385.36 L315.00,385.64 L315.50,384.59 L315.75,387.50 L316.25,383.90 L317.00,384.29 L318.00,385.00 L318.75,387.34 L319.25,383.04 L320.00,384.22 L321.00,385.62 L321.50,385.32 L322.00,385.62 L322.50,385.13 L323.00,385.26 L323.75,383.66 L324.25,386.72 L325.00,384.42 L325.50,384.53 L326.00,384.47 L326.50,385.48 L326.75,383.78 L327.25,385.88 L328.00,385.21 L328.50,385.89 L329.00,385.30 L330.00,385.62 L330.50,384.33 L330.75,386.51 L331.25,382.35 L332.00,383.95 L332.75,383.04 L333.25,385.92 L334.00,384.85 L334.50,385.50 L335.00,384.22 L335.50,384.11 L336.00,383.96 L336.50,384.02 L336.75,382.96 L337.25,386.42 L338.00,383.93 L339.00,385.71 L340.00,384.06 L340.75,386.22 L341.25,383.74 L342.00,385.87 L343.00,385.62 L343.50,385.31 L344.00,384.83 L344.50,385.79 L344.75,386.07 L345.25,383.66 L346.00,384.57 L347.00,384.55 L347.75,382.97 L348.25,387.29 L349.00,385.10 L350.00,385.05 L350.50,385.42 L351.00,384.41 L351.75,386.49 L352.25,382.31 L353.00,384.76 L354.00,385.20 L354.75,383.20 L355.25,386.34 L356.00,384.46 L356.50,385.53 L357.00,385.53 L357.75,382.14 L358.25,386.63 L359.00,385.08 L360.00,384.12 L361.00,384.21 L361.50,384.45 L361.75,382.48 L362.25,386.48 L363.00,385.13 L363.50,385.04 L364.00,384.63 L365.00,384.49 L365.75,385.88 L366.25,383.69 L367.00,384.43 L368.00,383.89 L368.50,385.68 L368.75,386.54 L369.25,382.35 L370.00,384.41 L371.00,385.05 L371.75,382.46 L372.25,387.04 L373.00,384.82 L373.50,384.49 L374.00,385.83 L374.75,386.61 L375.25,382.04 L376.00,385.29 L376.50,385.49 L377.00,385.56 L378.00,384.21 L378.50,385.34 L378.75,387.38 L379.25,383.70 L380.00,384.74 L380.50,384.90 L381.00,385.14 L381.75,383.69 L382.25,386.15 L383.00,384.05 L383.50,385.32 L384.00,385.01 L384.75,382.61 L385.25,387.06 L386.00,384.36 L387.00,384.81 L388.00,383.99 L388.75,382.65 L389.25,387.19 L390.00,384.23 L391.00,384.84 L391.75,383.09 L392.25,387.26 L393.00,383.83 L394.00,385.04 L394.50,384.76 L394.75,382.83 L395.25,385.91 L396.00,384.49 L396.75,386.81 L397.25,382.18 L398.00,384.44 L398.50,384.32 L399.00,384.26 L399.75,382.70 L400.25,386.03 L401.00,384.21 L401.50,384.70 L401.75,386.10 L402.25,382.59 L403.00,384.64 L403.50,385.29 L404.00,385.32 L404.50,384.41 L405.00,385.16 L405.75,383.42 L406.25,386.35 L407.00,383.81 L408.00,385.05 L408.50,384.87 L409.00,385.10 L409.50,385.14 L409.75,386.10 L410.25,383.40 L411.00,385.06 L411.50,384.66 L411.75,381.91 L412.25,386.52 L413.00,384.38 L413.50,385.34 L414.00,385.40 L414.50,385.20 L414.75,386.67 L415.25,382.22 L416.00,384.78 L416.50,385.71 L417.00,384.41 L417.50,384.44 L418.00,385.08 L418.50,384.25 L419.00,385.18 L419.75,383.57 L420.25,387.10 L421.00,385.13 L422.00,384.97 L422.75,383.41 L423.25,386.98 L424.00,385.15 L425.00,383.97 L425.50,384.15 L426.00,384.90 L426.50,385.65 L426.75,386.91 L427.25,383.66 L428.00,385.55 L429.00,385.34 L430.00,385.03 L430.75,382.26 L431.25,386.99 L432.00,383.80 L432.50,385.23 L433.00,384.77 L433.50,384.68 L433.75,387.21 L434.25,383.63 L435.00,385.19 L436.00,385.46 L437.00,384.71 L437.50,384.69 L437.75,386.73 L438.25,382.92 L439.00,384.75 L439.50,383.73 L440.00,385.37 L440.75,381.91 L441.25,386.92 L442.00,384.20 L442.50,384.65 L443.00,385.07 L443.50,383.83 L444.00,385.57 L444.50,385.20 L444.75,387.24 L445.25,382.75 L446.00,384.40 L446.50,385.67 L447.00,384.70 L447.50,384.75 L448.00,385.47 L448.75,383.26 L449.25,386.02 L450.00,385.63 L450.75,386.36 L451.25,383.08 L452.00,384.64 L452.50,384.22 L453.00,384.49 L453.50,384.81 L454.00,383.83 L454.75,386.59 L455.25,383.43 L456.00,385.67 L457.00,385.23 L458.00,384.82 L458.75,386.97 L459.25,382.78 L460.00,384.21 L460.50,384.64 L460.75,386.88 L461.25,382.05 L462.00,385.47 L462.75,383.27 L463.25,386.79 L464.00,383.91 L464.50,384.66 L465.00,385.04 L465.50,384.73 L466.00,385.02 L467.00,385.59 L467.75,382.62 L468.25,385.65 L469.00,385.56 L470.00,384.13 L470.50,385.44 L470.75,383.55 L471.25,386.32 L472.00,385.02 L472.50,385.44 L473.00,384.63 L474.00,384.79 L474.75,382.09 L475.25,386.19 L476.00,385.33 L476.50,384.51 L477.00,384.83 L477.50,384.51 L478.00,384.53 L478.50,384.56 L478.75,382.70 L479.25,386.59 L480.00,385.54 L480.50,385.42 L481.00,384.97 L482.00,384.90 L483.00,385.20 L483.50,383.60 L483.75,386.07 L484.25,381.66 L485.00,385.56 L486.00,384.24 L486.75,385.65 L487.25,382.17 L488.00,383.61 L488.50,384.17 L488.75,382.47 L489.25,386.66 L490.00,384.42 L490.50,384.60 L490.75,383.09 L491.25,386.10 L492.00,383.87 L492.50,383.68 L492.75,382.98 L493.25,386.03 L494.00,385.07 L495.00,385.08 L495.75,386.33 L496.25,382.65 L497.00,385.24 L497.50,384.92 L498.00,384.98 L498.75,381.67 L499.25,386.12 L500.00,383.64 L501.00,385.17 L501.50,385.04 L501.75,383.38 L502.25,385.86 L503.00,384.15 L503.50,385.50 L504.00,383.53 L505.00,384.85 L505.75,386.94 L506.25,382.67 L507.00,384.52 L508.00,384.13 L509.00,384.62 L509.75,381.63 L510.25,386.36 L511.00,385.32 L511.50,384.93 L512.00,384.17 L512.75,383.09 L513.25,385.79 L514.00,385.29 L514.50,385.40 L515.00,385.35 L515.50,384.72 L515.75,383.02 L516.25,385.97 L517.00,383.81 L518.00,384.50 L518.50,384.35 L518.75,386.49 L519.25,382.53 L520.00,384.81 L520.75,382.43 L521.25,386.87 L522.00,383.69 L523.00,383.83 L524.00,384.03 L525.00,383.75 L525.75,386.06 L526.25,382.01 L527.00,383.97 L527.75,381.59 L528.25,386.04 L529.00,383.46 L529.50,383.51 L530.00,385.13 L530.50,385.36 L530.75,381.64 L531.25,386.48 L532.00,385.10 L533.00,384.35 L534.00,383.49 L534.50,385.07 L535.00,384.45 L535.75,382.18 L536.25,386.75 L537.00,384.22 L537.50,384.19 L538.00,384.16 L538.50,384.64 L538.75,382.22 L539.25,385.88 L540.00,383.50 L541.00,384.93 L542.00,385.25 L542.75,381.55 L543.25,385.58 L544.00,385.24 L545.00,383.56 L546.00,384.08 L546.50,383.60 L547.00,384.58 L547.50,384.73 L547.75,383.09 L548.25,386.16 L549.00,384.81 L549.50,384.87 L550.00,384.55 L550.50,384.72 L551.00,384.93 L551.50,384.10 L552.00,383.88 L552.75,385.40 L553.25,383.20 L554.00,384.08 L554.50,383.44 L555.00,384.72 L556.00,383.68 L556.75,381.41 L557.25,385.55 L558.00,384.43 L559.00,384.08 L560.00,384.04 L560.75,382.61 L561.25,385.45 L562.00,384.54 L562.50,384.69 L563.00,383.50 L563.50,385.03 L563.75,385.92 L564.25,382.61 L565.00,384.02 L565.50,383.94 L566.00,383.61 L566.50,384.16 L567.00,384.18 L567.50,383.59 L567.75,382.18 L568.25,385.23 L569.00,385.07 L569.50,383.74 L570.00,384.25 L570.50,384.81 L571.00,383.88 L571.75,384.86 L572.25,381.15 L573.00,383.27 L573.50,383.16 L574.00,383.38 L575.00,384.15 L575.50,383.05 L575.75,385.59 L576.25,381.78 L577.00,382.34 L577.50,382.56 L577.75,380.60 L578.25,384.42 L579.00,383.06 L579.75,381.56 L580.25,383.18 L581.00,381.46 L581.50,381.34 L582.00,380.21 L583.00,380.06 L583.50,380.01 L583.75,377.54 L584.25,379.75 L585.00,378.27 L586.00,378.34 L586.50,377.99 L586.75,379.25 L587.25,380.49 L588.00,381.88 L588.50,381.80 L589.00,383.68 L589.50,383.62 L590.00,383.60 L590.50,383.26 L590.75,384.45 L591.25,380.97 L592.00,383.24 L593.00,384.06 L593.50,383.59 L594.00,384.32 L594.50,382.44 L594.75,380.59 L595.25,385.20 L596.00,383.21 L596.50,384.09 L597.00,382.85 L597.50,383.15 L598.00,384.34 L598.50,382.83 L598.75,384.97 L599.25,382.07 L600.00,382.62 L600.75,386.02 L601.25,381.11 L602.00,384.37 L603.00,383.09 L603.50,383.34 L604.00,383.21 L604.75,381.38 L605.25,385.50 L606.00,383.53 L607.00,384.36 L607.50,383.81 L608.00,384.72 L609.00,383.22 L609.50,382.93 L609.75,382.22 L610.25,386.07 L611.00,383.51 L611.50,384.05 L612.00,383.18 L613.00,383.73 L613.75,381.27 L614.25,386.38 L615.00,384.37 L615.50,384.54 L616.00,384.90 L616.50,384.15 L616.75,386.00 L617.25,382.82 L618.00,383.64 L619.00,383.01 L620.00,383.15 L620.50,383.57 L621.00,383.30 L621.75,381.44 L622.25,385.89 L623.00,383.24 L623.50,384.16 L624.00,383.42 L625.00,384.32 L625.75,386.52 L626.25,382.44 L627.00,384.06 L628.00,384.38 L629.00,384.06 L629.75,385.47 L630.25,383.21 L631.00,384.73 L631.50,383.80 L632.00,383.95 L632.50,384.83 L633.00,384.95 L633.50,384.82 L633.75,382.45 L634.25,386.41 L635.00,384.72 L636.00,383.63 L636.50,383.45 L637.00,384.67 L638.00,383.53 L638.75,382.08 L639.25,386.55 L640.00,384.13 L640.50,384.99 L641.00,384.09 L641.75,382.16 L642.25,385.89 L643.00,385.06 L643.50,385.18 L644.00,383.68 L644.50,385.04 L645.00,384.53 L645.50,383.44 L645.75,386.39 L646.25,382.67 L647.00,384.73 L648.00,383.85 L649.00,384.15 L649.50,384.54 L650.00,383.52 L650.75,384.97 L651.25,381.40 L652.00,383.63 L652.50,384.41 L653.00,384.25 L653.50,383.95 L654.00,384.56 L654.50,383.20 L654.75,382.62 L655.25,385.26 L656.00,384.35 L656.50,384.29 L657.00,383.41 L658.00,383.06 L659.00,383.10 L659.50,382.83 L659.75,382.41 L660.25,384.85 L661.00,384.20 L662.00,383.73 L663.00,383.28 L663.50,383.17 L663.75,381.83 L664.25,385.16 L665.00,383.50 L666.00,383.24 L666.75,381.78 L667.25,383.25 L668.00,381.71 L668.75,378.71 L669.25,380.92 L670.00,378.02 L670.50,378.17 L671.00,376.13 L671.50,376.60 L672.00,374.41 L672.50,374.17 L672.75,372.35 L673.25,373.89 L674.00,372.34 L675.00,371.53 L675.50,371.20 L676.00,370.60 L676.50,370.44 L676.75,370.75 L677.25,368.61 L678.00,370.01 L679.00,370.82 L679.75,372.03 L680.25,369.94 L681.00,375.14 L682.00,379.00 L682.50,379.09 L683.00,382.93 L683.50,382.55 L683.75,383.91 L684.25,382.06 L685.00,382.36 L686.00,382.60 L686.50,382.92 L687.00,383.73 L687.50,382.96 L688.00,383.60 L688.50,382.80 L688.75,385.20 L689.25,380.92 L690.00,382.72 L690.50,383.57 L690.75,382.36 L691.25,385.52 L692.00,384.75 L693.00,384.86 L694.00,384.60 L694.50,383.56 L694.75,381.26 L695.25,385.85 L696.00,384.38 L697.00,383.86 L697.50,383.77 L698.00,384.78 L698.50,384.21" fill="none" stroke="#303030" stroke-width="1" stroke-linejoin="round"/>
<rect x="32" y="282" width="670" height="1" fill="#484848"/>
<rect x="32" y="464" width="670" height="2" fill="#888"/>
<rect x="701" y="282" width="2" height="184" fill="#2a2a2a"/>
<text x="37" y="293.5" font-family="Liberation Sans" font-size="11" fill="#2a2a2a" text-anchor="start">+2V</text>
<text x="205" y="293.5" font-family="Liberation Sans" font-size="11" fill="#2a2a2a" text-anchor="middle">Virtual &amp; Pumping</text>
<text x="281.5" y="293.5" font-family="Liberation Sans" font-size="11" fill="#2a2a2a" text-anchor="start" word-spacing="1.5">Max : -0.15 V</text>
<text x="400" y="293.5" font-family="Liberation Sans" font-size="11" fill="#2a2a2a" text-anchor="start" word-spacing="1.5">Avg : -0.25 V</text>
<text x="518.5" y="293.5" font-family="Liberation Sans" font-size="11" fill="#2a2a2a" text-anchor="start" word-spacing="1.5">Min : -0.31 V</text>
<text x="36.2" y="459" font-family="Liberation Sans" font-size="11" fill="#2a2a2a" text-anchor="start">-2V</text>
<rect x="639.5" y="288.5" width="12" height="12" fill="#fff" stroke="#a4b6d8" stroke-width="1.4"/>
<rect x="655.5" y="286.5" width="19" height="18" rx="2.5" fill="url(#pb)" stroke="#3a5a90" stroke-width="1.3"/>
<path d="M658.3,286.5 H671.7 M658.3,304.5 H671.7 M655.5,289.3 V301.7 M674.5,289.3 V301.7" stroke="#c4cee0" stroke-width="1.6"/>
<rect x="677.0" y="286.5" width="19" height="18" rx="2.5" fill="url(#pb)" stroke="#3a5a90" stroke-width="1.3"/>
<path d="M679.8,286.5 H693.2 M679.8,304.5 H693.2 M677.0,289.3 V301.7 M696.0,289.3 V301.7" stroke="#c4cee0" stroke-width="1.6"/>
<path d="M661.0,295.5 H670.0 M665.5,291.0 V300.0" stroke="#8e9298" stroke-width="3.6" stroke-linecap="round"/>
<path d="M681.5,290.0 L692.5,301.0 M692.5,290.0 L681.5,301.0" stroke="#acb0b8" stroke-width="2.3" stroke-linecap="round"/>
<text x="243" y="463" font-family="Liberation Sans" font-size="11" fill="#ff3030">A</text>
<text x="470" y="463" font-family="Liberation Sans" font-size="11" fill="#222">B</text>
<path d="M154,75.3 L159.4,75.3 L156.7,72 Z M154,78 L159.4,78 L156.7,80.6 Z" fill="#d0e0c8"/>
<rect x="30" y="278" width="3" height="4" fill="#7aa0d0"/>
<rect x="11" y="469" width="690" height="15" fill="url(#trk)"/>
<rect x="26" y="482.5" width="664" height="1.2" fill="#b4b4b4"/>
<path d="M16,477 L20,474 L20,480 Z" fill="#555"/>
<path d="M698,477 L694,474 L694,480 Z" fill="#555"/>
<rect x="302.5" y="471.5" width="12" height="12" rx="2" fill="url(#thumb)" stroke="#bcbcbc"/>
<line x1="305" y1="474.5" x2="312" y2="474.5" stroke="#8a8a8a" stroke-width="1"/>
<rect x="474" y="72" width="2" height="9" fill="#e8f0fa"/><path d="M476,76.5 L483,72 L483,81 Z" fill="#e8f0fa"/>
<path d="M501,76.5 L509,72 L509,81 Z" fill="#e8f0fa"/>
<rect x="529" y="73" width="7" height="7" fill="#f0f4fa"/>
<path d="M557,72 L565,76.5 L557,81 Z" fill="#e8f0fa"/>
<path d="M583,72 L590,76.5 L583,81 Z" fill="#e8f0fa"/><rect x="590" y="72" width="2" height="9" fill="#e8f0fa"/>
<path d="M478.8,50.8 L484.3,46.5 L484.3,55.2 Z" fill="url(#arr)"/>
<path d="M559,50.5 L555,46 L555,55 Z" fill="url(#arr)"/>
<path d="M588,50.5 L595,45 L595,56 Z" fill="url(#arr)"/>
<path d="M680,50.5 L673,45 L673,56 Z" fill="url(#arr)"/>
<rect x="652.5" y="12.5" width="18" height="16" rx="3" fill="url(#tbb)" stroke="#c4ccda" stroke-width="1"/>
<rect x="679.5" y="12.5" width="18" height="16" rx="3" fill="url(#tbb)" stroke="#c4ccda" stroke-width="1"/>
<rect x="654.5" y="16.5" width="8" height="6" fill="#dfe5ee" stroke="#4d5a72" stroke-width="1"/>
<path d="M665,19.5 L668,17 L668,22 Z" fill="#3a4660"/>
<rect x="664.5" y="24" width="4" height="2" fill="#dfe5ee"/>
<line x1="654" y1="25.5" x2="663" y2="25.5" stroke="#b0bacb" stroke-width="1" stroke-dasharray="1,1"/>
<rect x="682.5" y="15.5" width="12" height="4" fill="#e8ecf2" stroke="#4d5a72" stroke-width="1"/>
<rect x="682.5" y="23.5" width="12" height="4" fill="#e8ecf2" stroke="#4d5a72" stroke-width="1"/>
</svg>

</body></html>
